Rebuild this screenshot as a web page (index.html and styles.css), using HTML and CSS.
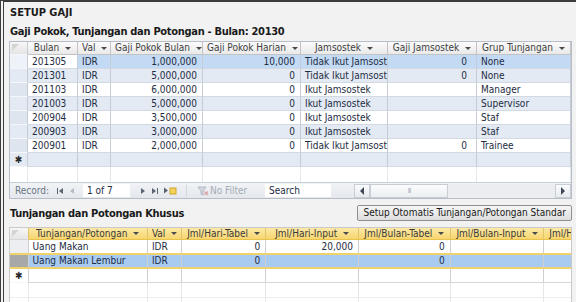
FILE: index.html
```html
<!DOCTYPE html>
<html lang="id">
<head>
    <meta charset="UTF-8">
    <title>Setup Gaji</title>
    <link rel="stylesheet" href="styles.css">
</head>
<body>
<div class="form">
    <div class="form-title">SETUP GAJI</div>
    <div class="section-title first">Gaji Pokok, Tunjangan dan Potongan - Bulan: 20130</div>

    <div class="sheet sheet-main">
        <table class="grid">
            <colgroup>
                <col style="width:18px"><col style="width:50px"><col style="width:33px"><col style="width:92px">
                <col style="width:98px"><col style="width:87px"><col style="width:89px"><col style="width:94px">
            </colgroup>
            <thead>
                <tr>
                    <th class="sel corner"></th>
                    <th><span class="hd">Bulan<i class="drop"></i></span></th>
                    <th><span class="hd">Val<i class="drop"></i></span></th>
                    <th><span class="hd">Gaji Pokok Bulan<i class="drop"></i></span></th>
                    <th><span class="hd">Gaji Pokok Harian<i class="drop"></i></span></th>
                    <th><span class="hd">Jamsostek<i class="drop"></i></span></th>
                    <th><span class="hd">Gaji Jamsostek<i class="drop"></i></span></th>
                    <th><span class="hd">Grup Tunjangan<i class="drop"></i></span></th>
                </tr>
            </thead>
            <tbody>
                <tr class="current">
                    <td class="sel"></td><td class="focus">201305</td><td>IDR</td><td class="num">1,000,000</td>
                    <td class="num">10,000</td><td>Tidak Ikut Jamsost</td><td class="num wide">0</td><td>None</td>
                </tr>
                <tr class="alt">
                    <td class="sel"></td><td>201301</td><td>IDR</td><td class="num">5,000,000</td>
                    <td class="num">0</td><td>Tidak Ikut Jamsost</td><td class="num wide">0</td><td>None</td>
                </tr>
                <tr>
                    <td class="sel"></td><td>201103</td><td>IDR</td><td class="num">6,000,000</td>
                    <td class="num">0</td><td>Ikut Jamsostek</td><td></td><td>Manager</td>
                </tr>
                <tr class="alt">
                    <td class="sel"></td><td>201003</td><td>IDR</td><td class="num">5,000,000</td>
                    <td class="num">0</td><td>Ikut Jamsostek</td><td></td><td>Supervisor</td>
                </tr>
                <tr>
                    <td class="sel"></td><td>200904</td><td>IDR</td><td class="num">3,500,000</td>
                    <td class="num">0</td><td>Ikut Jamsostek</td><td></td><td>Staf</td>
                </tr>
                <tr class="alt">
                    <td class="sel"></td><td>200903</td><td>IDR</td><td class="num">3,000,000</td>
                    <td class="num">0</td><td>Ikut Jamsostek</td><td></td><td>Staf</td>
                </tr>
                <tr>
                    <td class="sel"></td><td>200901</td><td>IDR</td><td class="num">2,000,000</td>
                    <td class="num">0</td><td>Tidak Ikut Jamsost</td><td class="num wide">0</td><td>Trainee</td>
                </tr>
                <tr class="alt newrow">
                    <td class="sel star">✱</td><td></td><td></td><td></td><td></td><td></td><td></td><td></td>
                </tr>
                <tr class="blank">
                    <td class="sel"></td><td></td><td></td><td></td><td></td><td></td><td></td><td></td>
                </tr>
            </tbody>
        </table>

        <div class="navbar">
            <span class="nav-label">Record:</span>
            <svg class="nav-ico first-ico" width="8" height="8" viewBox="0 0 8 8"><rect x="1" y="1" width="1" height="6" fill="#5a6472"/><path d="M7 1 L3 4 L7 7 Z" fill="#5a6472"/></svg>
            <svg class="nav-ico prev-ico" width="6" height="8" viewBox="0 0 6 8"><path d="M5 1 L1 4 L5 7 Z" fill="#b5bcc6"/></svg>
            <span class="nav-pos">1 of 7</span>
            <svg class="nav-ico next-ico" width="6" height="8" viewBox="0 0 6 8"><path d="M1 1 L5 4 L1 7 Z" fill="#5a6472"/></svg>
            <svg class="nav-ico last-ico" width="8" height="8" viewBox="0 0 8 8"><path d="M1 1 L5 4 L1 7 Z" fill="#5a6472"/><rect x="6" y="1" width="1" height="6" fill="#5a6472"/></svg>
            <svg class="nav-ico" width="14" height="9" viewBox="0 0 14 9"><path d="M1 1.5 L5 4.5 L1 7.5 Z" fill="#5a6472"/><rect x="7" y="2" width="6" height="6" fill="#f6d25a" stroke="#d1a52a"/></svg>
            <span class="nav-sep"></span>
            <span class="nav-filter">
                <svg width="12" height="10" viewBox="0 0 12 10"><path d="M1 1 H9 L6 5 V9 L4 8 V5 Z" fill="#d4d8de" stroke="#a9b0ba" stroke-width="0.8"/><path d="M7.5 5.5 L11 9 M11 5.5 L7.5 9" stroke="#d9a3a3" stroke-width="1.2"/></svg>
                No Filter
            </span>
            <span class="nav-search">Search</span>
            <div class="hscroll">
                <span class="sb-btn"><i class="tri left"></i></span>
                <span class="sb-thumb">III</span>
                <span class="sb-track"></span>
                <span class="sb-btn"><i class="tri right"></i></span>
            </div>
        </div>
    </div>

    <div class="section-head">
        <div class="section-title">Tunjangan dan Potongan Khusus</div>
        <button class="btn">Setup Otomatis Tunjangan/Potongan Standar</button>
    </div>

    <div class="sheet sheet-sub">
        <table class="grid yellow">
            <colgroup>
                <col style="width:18px"><col style="width:116px"><col style="width:33px"><col style="width:82px">
                <col style="width:90px"><col style="width:89px"><col style="width:91px"><col style="width:90px">
            </colgroup>
            <thead>
                <tr>
                    <th class="sel corner"></th>
                    <th><span class="hd">Tunjangan/Potongan<i class="drop"></i></span></th>
                    <th><span class="hd">Val<i class="drop"></i></span></th>
                    <th><span class="hd">Jml/Hari-Tabel<i class="drop"></i></span></th>
                    <th><span class="hd">Jml/Hari-Input<i class="drop"></i></span></th>
                    <th><span class="hd">Jml/Bulan-Tabel<i class="drop"></i></span></th>
                    <th><span class="hd">Jml/Bulan-Input<i class="drop"></i></span></th>
                    <th><span class="hd">Jml/Hari-Potong<i class="drop"></i></span></th>
                </tr>
            </thead>
            <tbody>
                <tr class="pre">
                    <td class="sel"></td><td>Uang Makan</td><td>IDR</td><td class="num">0</td>
                    <td class="num">20,000</td><td class="num">0</td><td></td><td></td>
                </tr>
                <tr class="picked">
                    <td class="sel"></td><td>Uang Makan Lembur</td><td>IDR</td><td class="num">0</td>
                    <td></td><td class="num">0</td><td></td><td></td>
                </tr>
                <tr class="newrow">
                    <td class="sel star">✱</td><td></td><td></td><td></td><td></td><td></td><td></td><td></td>
                </tr>
                <tr class="blank">
                    <td class="sel"></td><td></td><td></td><td></td><td></td><td></td><td></td><td></td>
                </tr>
                <tr class="blank">
                    <td class="sel"></td><td></td><td></td><td></td><td></td><td></td><td></td><td></td>
                </tr>
            </tbody>
        </table>
    </div>
</div>
</body>
</html>
```

FILE: styles.css
```css
body {
    margin: 0;
    background: #ffffff;
    font-family: "DejaVu Sans", sans-serif;
    font-stretch: condensed;
}
.form {
    height: 300px;
    overflow: hidden;
    background: #f2f2f2;
    border-top: 2px solid #3c3c3c;
    border-left: 4px double #3c3c3c;
}
.form-title {
    margin: 4px 0 0 6px;
    font-size: 11px;
    font-weight: bold;
    line-height: 14px;
    color: #1a1a1a;
}
.section-title {
    padding-left: 6px;
    font-size: 11px;
    font-weight: bold;
    line-height: 14px;
    letter-spacing: -0.3px;
    color: #1a1a1a;
}
.section-title.first {
    margin-top: 5px;
    margin-bottom: 2px;
}
.sheet {
    margin-left: 5px;
    width: 563px;
    box-sizing: border-box;
    border: 1px solid #b7bec9;
    overflow: hidden;
    background: #ffffff;
}
.grid {
    border-collapse: separate;
    border-spacing: 0;
    table-layout: fixed;
    width: 561px;
    font-size: 10px;
    color: #1e2c42;
}
.grid th,
.grid td {
    padding: 0 4px;
    white-space: nowrap;
    overflow: hidden;
    text-overflow: clip;
    border-right: 1px solid #c6ccd4;
    border-bottom: 1px solid #d3d9e2;
    line-height: 13px;
    text-align: left;
    font-weight: normal;
}
.grid th {
    line-height: 12px;
    text-align: center;
    color: #3e3e3e;
    background: linear-gradient(#fbfbfb, #e9e9e9);
    border-bottom-color: #c3c3c3;
    border-right-color: #c3c3c3;
}
.hd {
    display: inline-flex;
    align-items: center;
    gap: 6px;
}
.drop {
    width: 0;
    height: 0;
    border-left: 3px solid transparent;
    border-right: 3px solid transparent;
    border-top: 3px solid #4a4a4a;
}
.grid .num {
    text-align: right;
    padding-right: 5px;
}
.grid .num.wide {
    padding-right: 9px;
}
.grid .sel {
    padding: 0;
    background: #dfe5ee;
    border-right-color: #c6ccd4;
    border-bottom-color: #f4f6f9;
}
.grid th.corner {
    position: relative;
    background: linear-gradient(#f7f7f7, #e4e4e4);
}
.grid th.corner::before {
    content: "";
    position: absolute;
    left: 2px;
    top: 2px;
    border-top: 7px solid #d4d4d4;
    border-right: 7px solid transparent;
}
.grid tr.alt td {
    background: #e3eaf4;
}
.grid tr.current td {
    background: #c3daf4;
}
.grid tr.current td.focus {
    background: #ffffff;
}
.grid tr.current td.sel {
    background: #eef3f9;
}
.grid .star {
    text-align: center;
    font-size: 10px;
    color: #2a2a2a;
}
.grid tr.blank td {
    height: 15px;
    line-height: 15px;
    border-bottom: none;
    background: #ffffff;
    border-right-color: #e4e7eb;
}
.grid tr.blank td.sel {
    background: #ffffff;
    border-right-color: #e4e7eb;
}

/* navigation bar */
.navbar {
    display: flex;
    align-items: center;
    height: 15px;
    border-top: 1px solid #c8ced6;
    background: linear-gradient(#f1f3f6, #e4e8ed);
    font-size: 10px;
    color: #6b7685;
}
.nav-label {
    width: 35px;
    margin-left: 5px;
    margin-right: 6px;
}
.nav-ico {
    display: block;
    flex: none;
}
.first-ico {
    margin-right: 5px;
}
.prev-ico {
    margin-right: 8px;
}
.nav-pos {
    width: 43px;
    height: 13px;
    line-height: 13px;
    padding-left: 4px;
    margin-right: 10px;
    background: #ffffff;
    color: #1e2c42;
}
.next-ico {
    margin-right: 5px;
}
.last-ico {
    margin-right: 4px;
}
.nav-sep {
    width: 1px;
    height: 12px;
    margin: 0 10px 0 9px;
    background: #d3d8df;
}
.nav-filter {
    display: flex;
    align-items: center;
    gap: 1px;
    width: 56px;
    flex: none;
    color: #a4abb5;
}
.nav-search {
    width: 62px;
    height: 13px;
    line-height: 13px;
    margin-left: 12px;
    padding-left: 4px;
    background: #ffffff;
    color: #1e2c42;
}
.hscroll {
    display: flex;
    flex: 1;
    margin-left: 23px;
    height: 14px;
    background: #ebedf0;
}
.sb-btn {
    display: flex;
    align-items: center;
    justify-content: center;
    width: 16px;
    border: 1px solid #c9ced5;
    box-sizing: border-box;
    background: linear-gradient(#fafbfc, #e7eaee);
}
.sb-thumb {
    width: 78px;
    box-sizing: border-box;
    border: 1px solid #c9ced5;
    background: linear-gradient(#fafbfc, #eceff2);
    text-align: center;
    font-size: 7px;
    line-height: 12px;
    color: #a9b0ba;
    letter-spacing: -1px;
}
.sb-track {
    flex: 1;
}
.tri {
    width: 0;
    height: 0;
    border-top: 4px solid transparent;
    border-bottom: 4px solid transparent;
}
.tri.left {
    border-right: 4px solid #3e4756;
}
.tri.right {
    border-left: 4px solid #3e4756;
}

/* lower section */
.section-head {
    display: flex;
    align-items: center;
    justify-content: space-between;
    height: 27px;
    padding-right: 4px;
    margin-top: 1px;
}
.section-head .section-title {
    margin-top: 1px;
}
.btn {
    height: 16px;
    padding: 0 5px;
    margin-top: -2px;
    border: 1px solid #8e8f8f;
    border-radius: 2px;
    background: linear-gradient(#f6f6f6, #dedede);
    font-family: "DejaVu Sans", sans-serif;
    font-stretch: condensed;
    font-size: 10px;
    line-height: 14px;
    color: #1a1a1a;
}
.sheet-sub {
    border-bottom: none;
    border-color: #c9c9c9;
}
.grid.yellow {
    width: 627px;
}
.grid.yellow th {
    line-height: 11px;
    background: linear-gradient(#fce9a7, #f8d66f);
    border-bottom-color: #e9c24b;
    border-right-color: #e2c468;
    color: #3a3a3a;
}
.grid.yellow th.corner {
    background: linear-gradient(#f7f7f7, #e6e6e6);
    border-bottom-color: #d6d6d6;
}
.grid.yellow td {
    border-right-color: #cfcfcf;
    border-bottom-color: #d6d6d6;
}
.grid.yellow .sel {
    background: #eceef1;
    border-bottom-color: #f6f7f8;
}
.grid.yellow tr.pre td {
    border-bottom-color: #f0d26a;
}
.grid.yellow tr.picked td {
    line-height: 12px;
    background: #a9cbf2;
    border-top: 1px solid #f0d26a;
    border-bottom: 2px solid #f0d26a;
}
.grid.yellow tr.picked td.sel {
    background: #a8a8a8;
}
.grid.yellow tr.newrow td.sel {
    background: #ffffff;
}
.grid.yellow tr.blank td {
    height: 14px;
    line-height: 14px;
    border-bottom: 1px solid #eeeeee;
}
```
